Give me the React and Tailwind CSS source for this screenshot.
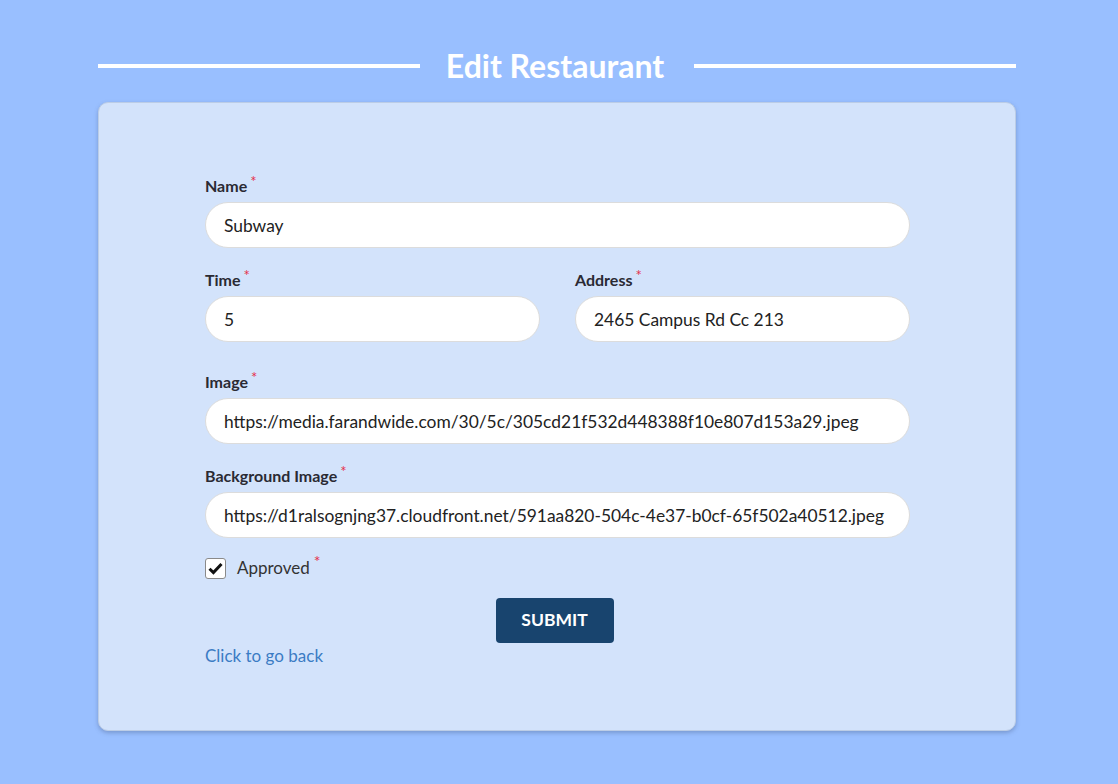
import React from 'react';

/* ─── Field ───────────────────────────────────────────────────────────── */
const Label = ({ children }) => (
  <label className="flex items-start h-[20px] mb-[6px] text-[16px] font-bold text-[#2a2a33] leading-[20px]">
    {children}
    <span className="text-[#e5304a] text-[15px] font-normal leading-[12px] ml-[3px] -mt-[1px]">*</span>
  </label>
);

const Input = ({ value }) => (
  <input
    readOnly
    value={value}
    className="w-full h-[46px] rounded-full bg-white border border-[#dcdcdc] px-[18px] text-[17.4px] text-[#222] outline-none"
  />
);

const Field = ({ label, value, className = '' }) => (
  <div className={className}>
    <Label>{label}</Label>
    <Input value={value} />
  </div>
);

/* ─── App ─────────────────────────────────────────────────────────────── */
export default function App() {
  return (
    <div
      className="min-h-[784px] bg-[#99bfff] pl-[98px] pr-[102px] pt-[46px] pb-[50px]"
      style={{ fontFamily: 'Lato, "Open Sans", sans-serif' }}
    >
      <div className="flex items-center h-[40px]">
        <div className="flex-1 h-[4px] bg-white" />
        <h1 className="pl-[26px] pr-[30px] text-[32px] font-bold text-white leading-none">Edit Restaurant</h1>
        <div className="flex-1 h-[4px] bg-white" />
      </div>

      <div className="mt-[16px] h-[629px] bg-[#d3e3fb] rounded-[10px] border border-[#bccde6] shadow-[0_2px_4px_rgba(60,80,120,0.35)] pl-[106px] pr-[105px] pt-[73px]">
        <Field label="Name" value="Subway" />

        <div className="flex gap-[35px] mt-[22px]">
          <Field label="Time" value="5" className="flex-1" />
          <Field label="Address" value="2465 Campus Rd Cc 213" className="flex-1" />
        </div>

        <Field
          label="Image"
          value="https://media.farandwide.com/30/5c/305cd21f532d448388f10e807d153a29.jpeg"
          className="mt-[30px]"
        />
        <Field
          label="Background Image"
          value="https://d1ralsognjng37.cloudfront.net/591aa820-504c-4e37-b0cf-65f502a40512.jpeg"
          className="mt-[22px]"
        />

        <div className="flex items-center mt-[19px] h-[22px]">
          <span className="w-[21px] h-[21px] bg-white border border-[#8a8a8a] rounded-[3px] flex items-center justify-center">
            <svg width="15" height="13" viewBox="0 0 15 13">
              <path d="M1.5 6.8 L5.4 10.6 L13.5 2" fill="none" stroke="#111" strokeWidth="3" />
            </svg>
          </span>
          <span className="ml-[11px] text-[17px] text-[#333]">Approved</span>
          <span className="text-[#e5304a] text-[16px] leading-[12px] ml-[4px] -mt-[14px]">*</span>
        </div>

        <div className="flex justify-center pr-[6px] mt-[19px]">
          <button className="w-[118px] h-[45px] rounded-[4px] bg-[#18446e] text-white text-[17.5px] font-bold">
            SUBMIT
          </button>
        </div>

        <a className="block text-[17px] text-[#3b7cc4] leading-[20px] mt-[3px]">Click to go back</a>
      </div>
    </div>
  );
}
